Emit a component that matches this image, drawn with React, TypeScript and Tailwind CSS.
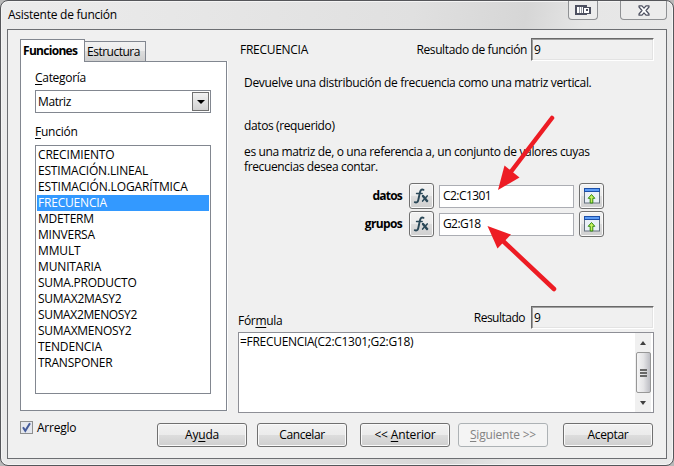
import type { ReactNode } from 'react';

const functions = [
  ['CRECIMIENTO', 'tracking-[-0.17px]'],
  ['ESTIMACIÓN.LINEAL', 'tracking-[-0.19px]'],
  ['ESTIMACIÓN.LOGARÍTMICA', 'tracking-[-0.13px]'],
  ['FRECUENCIA', 'tracking-[-0.2px]'],
  ['MDETERM', 'tracking-[-0.28px]'],
  ['MINVERSA', 'tracking-[-0.22px]'],
  ['MMULT', 'tracking-[-0.15px]'],
  ['MUNITARIA', 'tracking-[-0.15px]'],
  ['SUMA.PRODUCTO', 'tracking-[-0.25px]'],
  ['SUMAX2MASY2', 'tracking-[-0.25px]'],
  ['SUMAX2MENOSY2', 'tracking-[-0.35px]'],
  ['SUMAXMENOSY2', 'tracking-[-0.27px]'],
  ['TENDENCIA', 'tracking-[-0.15px]'],
  ['TRANSPONER', 'tracking-[-0.25px]'],
];

function Key({ children }: { children: ReactNode }) {
  return <span className="underline decoration-1 underline-offset-2">{children}</span>;
}

function Button({ children, className = '', disabled = false }: { children: ReactNode; className?: string; disabled?: boolean }) {
  return (
    <button
      disabled={disabled}
      className={`flex h-6 w-[90px] shrink-0 items-center justify-center rounded-[3px] border pb-px whitespace-pre ${
        disabled
          ? 'border-[#adb2b5] bg-[#f4f4f4] text-[#838383]'
          : 'border-[#707070] bg-[linear-gradient(#f2f2f2,#ebebeb_50%,#dddddd_50%,#cfcfcf)] shadow-[inset_0_0_0_1px_#fafafa]'
      } ${className}`}
    >
      {children}
    </button>
  );
}

function IconButton({ children }: { children: ReactNode }) {
  return (
    <button className="flex h-[26px] w-[25px] shrink-0 items-center justify-center rounded-[3px] border border-[#707070] bg-[linear-gradient(#f2f2f2,#ebebeb_50%,#dddddd_50%,#cfcfcf)] shadow-[inset_0_0_0_1px_#fafafa]">
      {children}
    </button>
  );
}

function ShrinkIcon() {
  return (
    <svg width="16" height="16" viewBox="0 0 16 16">
      <rect x="0.5" y="1" width="15" height="14" fill="#eaf0f7" stroke="#64717f" />
      <rect x="0" y="0" width="16" height="4" fill="#1c4fa8" />
      <rect x="1" y="1" width="14" height="2" fill="#5c9cf5" />
      <path d="M7.5 6.5 L10.8 10.3 H8.8 V15 H6.2 V10.3 H4.2 Z" fill="#c8f060" stroke="#2f8a0c" strokeLinejoin="round" />
    </svg>
  );
}

function Argument({ label, value, labelTracking, tracking }: { label: string; value: string; labelTracking: string; tracking: string }) {
  return (
    <div className="flex h-[26px] items-center">
      <span className={`w-[164px] text-right font-bold ${labelTracking}`}>{label}</span>
      <div className="ml-[7px] flex">
        <IconButton>
          <svg width="17" height="18" viewBox="0 0 17 18" fill="none" stroke="#2b4858" strokeLinecap="round">
            <path d="M10.5 2.8 C8.4 1.8 7.4 3.3 6.9 5.5 L5.3 13 C4.9 15.2 3.4 16 1.8 15.2" strokeWidth="1.9" />
            <path d="M3.5 6.5 H9.2" strokeWidth="1.4" />
            <path d="M10 9 L14 14" strokeWidth="2.4" />
            <path d="M14.2 8.9 L9.6 14.1" strokeWidth="1.5" />
          </svg>
        </IconButton>
      </div>
      <div className={`ml-[5px] flex h-[23px] w-[135px] items-center border border-[#abadb3] bg-white pl-[3px] ${tracking}`}>
        {value}
      </div>
      <div className="ml-[5px]">
        <IconButton>
          <ShrinkIcon />
        </IconButton>
      </div>
    </div>
  );
}

function ResultField() {
  return (
    <div className="flex h-[23px] w-[123px] items-center border border-t-[#696969] border-r-white border-b-white border-l-[#696969] shadow-[inset_1px_1px_0_#a0a0a0,inset_-1px_-1px_0_#e3e3e3]">
      <span className="pl-[2px]">9</span>
    </div>
  );
}

function TitleBar() {
  return (
    <div className="flex h-[28px] items-start">
      <span className="mt-[5px] ml-[7px] leading-[18px] tracking-[-0.25px]">Asistente de función</span>
      <div className="ml-auto flex h-[19px] w-[30px] items-center justify-center rounded-b-[4px] border border-t-0 border-[#8f9194] bg-[#ececec]">
        <svg width="16" height="10" viewBox="0 0 16 10" shapeRendering="crispEdges">
          <rect x="0" y="0" width="12" height="10" fill="#4d5060" />
          <rect x="2" y="2" width="8" height="6" fill="#fff" />
          <path d="M4 2h1v6H4zM6 2h1v6H6z" fill="#9a9da6" />
          <rect x="8" y="2" width="8" height="7" fill="#4d5060" />
          <rect x="9" y="3" width="5" height="5" fill="#fff" />
          <rect x="11" y="4" width="2" height="2" fill="#4d5060" />
        </svg>
      </div>
      <div className="mr-[6px] ml-[22px] flex h-[19px] w-[47px] items-center justify-center rounded-b-[4px] border border-t-0 border-[#8f9194] bg-[#ececec]">
        <svg width="12" height="11" viewBox="0 0 12 11">
          <path d="M1 .8 H4 L6 3.2 L8 .8 H11 V2 L8 5.5 L11 9 V10.2 H8 L6 7.8 L4 10.2 H1 V9 L4 5.5 L1 2Z" fill="#fff" stroke="#4d5060" strokeWidth="1.2" strokeLinejoin="round" />
        </svg>
      </div>
    </div>
  );
}

function FunctionPanel() {
  return (
    <div className="w-[207px] shrink-0">
      <div className="flex h-[22px] items-end">
        <div className="z-10 -mb-px flex h-[23px] w-[65px] items-center border border-b-0 border-[#828790] bg-white pb-px pl-[2px] font-bold tracking-[-0.7px]">
          Funciones
        </div>
        <div className="flex h-5 w-[61px] items-center border border-b-0 border-l-0 border-[#828790] bg-[linear-gradient(#f2f2f2,#ebebeb_50%,#dddddd_50%,#cfcfcf)] pl-[2px] tracking-[-0.5px]">
          Estructura
        </div>
      </div>
      <div className="h-[350px] border border-[#828790] bg-white px-[14px] shadow-[1px_0_0_#fff]">
        <div className="mt-[7px] h-[18px] leading-[18px] tracking-[-0.3px]">
          <Key>C</Key>ategoría
        </div>
        <div className="mt-[3px] flex h-[23px] w-[176px] items-center justify-between border border-[#828790] pr-px pl-[2px] tracking-[-0.4px]">
          <span>Matriz</span>
          <span className="flex h-[19px] w-[17px] items-center justify-center border border-[#707070] bg-linear-to-b from-[#f2f2f2] to-[#d2d2d2]">
            <span className="border-x-[4px] border-t-[4px] border-x-transparent border-t-black" />
          </span>
        </div>
        <div className="mt-[10px] h-[18px] leading-[18px] tracking-[-0.25px]">
          <Key>F</Key>unción
        </div>
        <ul className="mt-[4px] h-[249px] w-[176px] border border-[#828790] p-px">
          {functions.map(([name, tracking]) => (
            <li
              key={name}
              className={`h-4 pl-px leading-4 ${tracking} ${name === 'FRECUENCIA' ? 'bg-[#3399ff] text-white' : ''}`}
            >
              {name}
            </li>
          ))}
        </ul>
      </div>
    </div>
  );
}

function DetailPanel() {
  return (
    <div className="ml-[11px] w-[416px] shrink-0">
      <div className="-mt-px flex h-[23px] items-center pl-[2px]">
        <span className="tracking-[-0.28px]">FRECUENCIA</span>
        <span className="mr-[4px] ml-auto tracking-[-0.38px]">Resultado de función</span>
        <ResultField />
      </div>
      <div className="pl-[6px]">
        <p className="mt-[14px] leading-4 tracking-[-0.32px]">Devuelve una distribución de frecuencia como una matriz vertical.</p>
        <p className="mt-[27px] leading-4 tracking-[-0.38px]">datos (requerido)</p>
        <p className="mt-[10px] leading-[15px] tracking-[-0.36px]">
          es una matriz de, o una referencia a, un conjunto de valores cuyas
          <br />
          frecuencias desea contar.
        </p>
      </div>
      <div className="mt-[9px] flex flex-col gap-[2px]">
        <Argument label="datos" value="C2:C1301" labelTracking="tracking-[-0.8px]" tracking="tracking-[-0.55px]" />
        <Argument label="grupos" value="G2:G18" labelTracking="tracking-[-0.65px]" tracking="tracking-[-0.6px]" />
      </div>
      <div className="mt-[69px] flex h-[23px] items-center">
        <span className="mt-[6px] tracking-[-0.3px]">
          Fór<Key>m</Key>ula
        </span>
        <span className="mr-[6px] ml-auto tracking-[-0.5px]">Resultado</span>
        <ResultField />
      </div>
      <div className="mt-[3px] flex h-[81px] justify-between border border-[#8e8f96] bg-white">
        <span className="mt-px ml-px leading-4 tracking-[-0.3px]">=FRECUENCIA(C2:C1301;G2:G18)</span>
        <div className="mr-[2px] flex w-4 flex-col items-center bg-[#f0f0f0]">
          <div className="flex h-[19px] items-center">
            <span className="border-x-[3px] border-b-[4px] border-x-transparent border-b-[#404040]" />
          </div>
          <div className="flex h-[41px] w-[15px] flex-col items-center justify-center gap-px rounded-[2px] border border-[#979797] bg-linear-to-r from-[#f5f5f5] via-[#e4e4e6] to-[#bdbec4]">
            <span className="h-[2px] w-[7px] bg-[#686868]" />
            <span className="h-[2px] w-[7px] bg-[#686868]" />
            <span className="h-[2px] w-[7px] bg-[#686868]" />
          </div>
          <div className="flex h-[19px] items-center">
            <span className="border-x-[3px] border-t-[4px] border-x-transparent border-t-[#404040]" />
          </div>
        </div>
      </div>
    </div>
  );
}

export default function App() {
  return (
    <div className="h-[466px] w-[674px] bg-[#b9b9b9] text-[12px] leading-4 text-black [font-family:'Open_Sans','Noto_Sans',sans-serif]">
      <div className="h-full rounded-[8px] border border-[#55565a] bg-[linear-gradient(100deg,#ececec,#e0e0e0_55%,#d6d6d6_70%,#e6e6e6_78%,#e9e9e9)] shadow-[inset_0_0_0_1px_#f4f4f4]">
        <TitleBar />
        <div className="mx-[6px] h-[430px] border border-[#6c6e72] bg-[#f0f0f0]">
          <div className="flex pt-[9px] pl-[12px]">
            <FunctionPanel />
            <DetailPanel />
          </div>
          <div className="mt-[8px] flex items-start pl-[12px]">
            <div className="flex h-4 w-[137px] items-center">
              <span className="-mt-[3px] flex size-[13px] items-center justify-center border border-[#8e8f8f] bg-[#e4e7ee]">
                <svg width="11" height="11" viewBox="0 0 11 11">
                  <path d="M2 5.2 L4.3 8.8 L9 1.2" fill="none" stroke="#435a9a" strokeWidth="2" />
                </svg>
              </span>
              <span className="-mt-[3px] ml-[4px] tracking-[-0.25px]">
                Arre<Key>g</Key>lo
              </span>
            </div>
            <div className="mt-[2px] flex">
              <Button className="tracking-[-0.2px]">
                Ay<Key>u</Key>da
              </Button>
              <Button className="ml-[10px] tracking-[-0.4px]">Cancelar</Button>
              <Button className="ml-[13px] tracking-[-0.15px]">
                {'<< '}
                <Key>A</Key>nterior
              </Button>
              <Button disabled className="ml-[8px] tracking-[-0.2px]">
                <Key>S</Key>
                {'iguiente >>'}
              </Button>
              <Button className="ml-[15px] tracking-[-0.35px]">Aceptar</Button>
            </div>
          </div>
        </div>
      </div>
      <svg className="pointer-events-none absolute top-0 left-0" width="674" height="466" viewBox="0 0 674 466">
        <g stroke="#ed1c24" strokeWidth="4.5" strokeLinecap="round" fill="#ed1c24">
          <path d="M552 118 L510 173" />
          <path d="M554 289 L502 240" />
          <path stroke="none" d="M498 190 L504.500 165.500 L519.500 177.500Z" />
          <path stroke="none" d="M487.500 226 L511 234.500 L497.500 248.500Z" />
        </g>
      </svg>
    </div>
  );
}
